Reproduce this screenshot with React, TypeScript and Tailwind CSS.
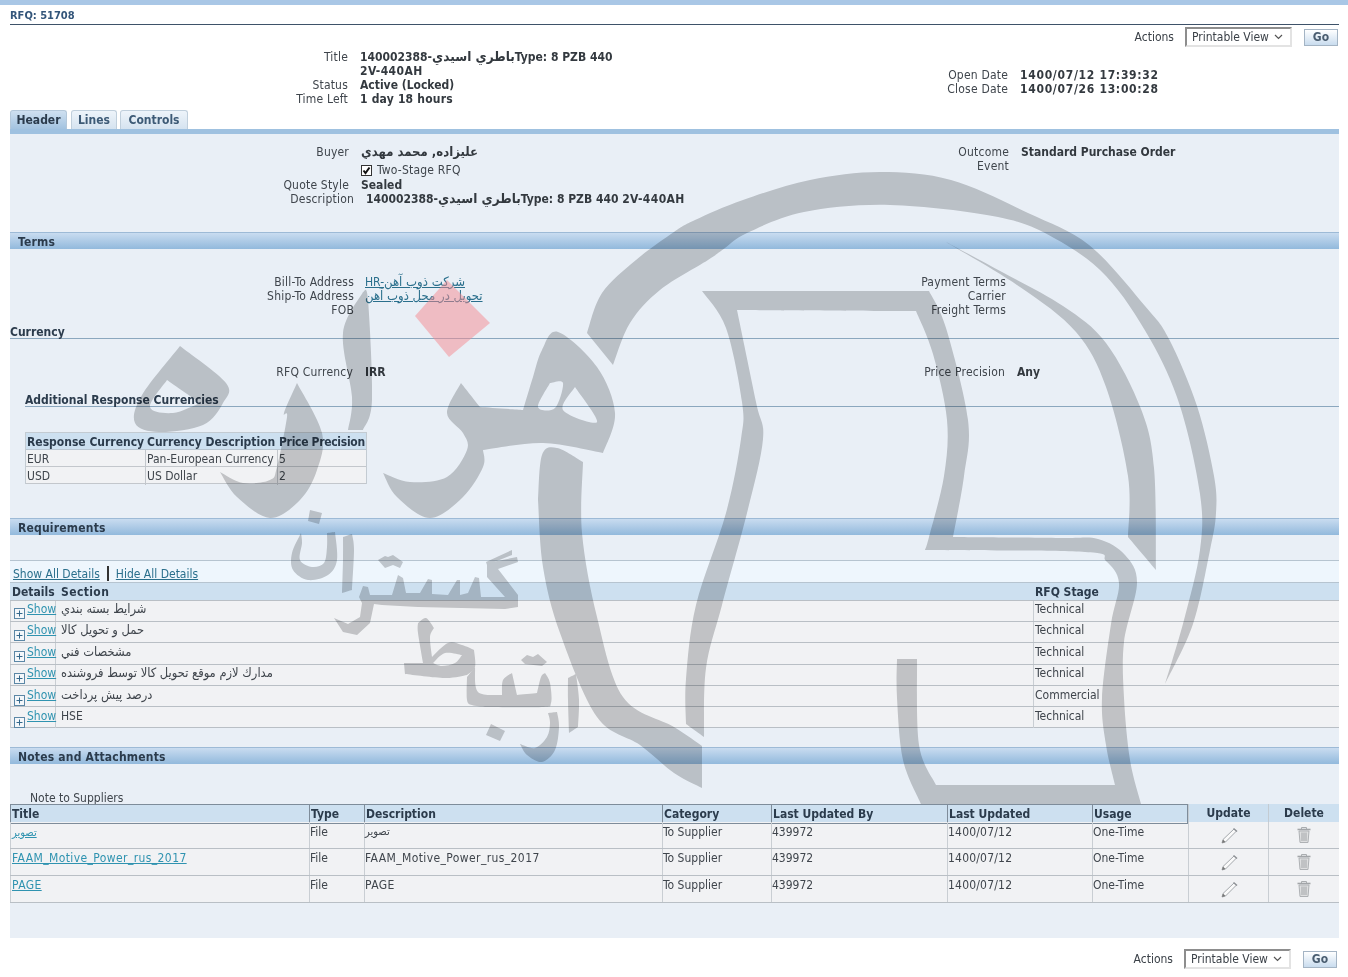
import React from "react";

const FONT = "[font-family:'DejaVu_Sans_Condensed','DejaVu_Sans',sans-serif]";

type Pt = [number, number];
// Builds a path through runs of points: each run is a smooth curve, runs meet at sharp corners.
function shape(runs: Pt[][]): string {
  let d = "";
  runs.forEach((p, idx) => {
    d += idx === 0 ? `M${p[0][0]} ${p[0][1]}` : `L${p[0][0]} ${p[0][1]}`;
    for (let i = 0; i < p.length - 1; i++) {
      const a = p[i - 1] || p[i];
      const b = p[i];
      const c = p[i + 1];
      const e = p[i + 2] || c;
      d += `C${b[0] + (c[0] - a[0]) / 6} ${b[1] + (c[1] - a[1]) / 6} ${c[0] - (e[0] - b[0]) / 6} ${c[1] - (e[1] - b[1]) / 6} ${c[0]} ${c[1]}`;
    }
  });
  return d + "Z";
}

const bigArc = shape([
  [[587,333],[602,293],[636,260],[674,232],[695,220],[743,200],[810,180],[880,172],[951,180],[1028,213],[1089,245],[1145,306],[1169,339],[1197,406],[1214,476],[1216,513],[1210,550],[1193,624],[1165,684]],
  [[1165,684],[1184,620],[1200,550],[1200,494],[1180,406],[1150,339],[1106,276],[1054,238],[998,217],[890,205],[804,212],[747,233],[725,248],[708,260],[660,290],[630,323],[613,365]],
]);
const thinArc = shape([
  [[946,242],[1002,272],[1063,306],[1106,343],[1141,409],[1154,468],[1156,570]],
  [[1156,570],[1128,537]],
  [[1128,537],[1128,476],[1106,387],[1076,332],[1020,287],[946,242]],
]);
const frame = shape([
  [[702,291],[929,291]],
  [[929,291],[946,328],[968,420],[964,476],[953,537]],
  [[953,537],[1060,538],[1098,539],[1125,555],[1137,583],[1124,642],[1124,698],[1130,760],[1141,804]],
  [[1141,804],[921,804]],
  [[921,804],[903,760],[897,698],[897,659]],
  [[897,659],[917,659]],
  [[917,659],[919,745],[936,785]],
  [[936,785],[1115,785]],
  [[1115,785],[1106,745],[1102,698],[1111,624],[1119,583],[1106,561],[1085,552],[925,550]],
  [[925,550],[929,537],[944,476],[947,420],[933,354],[916,311]],
  [[916,311],[737,310]],
  [[737,310],[756,402],[763,439],[747,513],[722,605],[706,668],[704,737]],
  [[704,737],[686,724]],
  [[686,724],[686,679],[696,605],[726,513],[741,439],[742,402],[726,328],[702,291]],
]);
const leftStroke = shape([
  [[538,500],[542,455],[557,448],[583,462]],
  [[583,462],[582,533],[597,617],[623,697],[674,727],[702,746]],
  [[702,746],[702,788]],
  [[702,788],[674,773],[640,745],[597,717],[560,633],[543,567],[538,500]],
]);
const hah = shape([
  [[180,346],[226,383],[223,403],[203,425],[159,432],[135,423],[142,395],[180,346]],
]) + shape([[[167,380],[200,403]],[[200,403],[173,413],[150,407],[167,380]]]);
const reh = shape([
  [[297,383],[322,433],[317,470],[300,500],[270,518],[237,497],[220,472]],
  [[220,472],[243,483],[270,480],[277,467],[287,417],[284,413],[297,383]],
]);
const alef = shape([
  [[363,292],[368,300],[372,400],[363,430]],
  [[363,430],[348,430]],
  [[348,430],[352,397],[343,333],[363,292]],
]);
const hehReh = shape([
  [[461,383],[480,407]],
  [[480,407],[523,410]],
  [[523,410],[533,377],[542,350],[558,332],[597,367],[615,413],[603,453]],
  [[603,453],[543,443],[483,450]],
  [[483,450],[483,467],[463,497],[430,518],[397,497],[383,473]],
  [[383,473],[410,482],[447,477],[467,450],[463,433],[447,413],[461,383]],
]) + shape([[[550,383],[563,383],[555,408],[538,407],[550,383]]]) + shape([[[575,387],[597,422],[563,410],[575,387]]]);
const gostaran = [
  "M310 510L322 513L319 524L308 521Z",
  shape([[[301,533],[292,553],[293,570],[308,580],[328,575],[337,560],[335,532]],[[335,532],[327,533]],[[327,533],[327,547],[324,563],[312,567],[300,560],[302,543],[301,533]]]),
  shape([[[343,537],[352,534]],[[352,534],[354,550],[352,590]],[[352,590],[342,593]],[[342,593],[343,560],[343,537]]]),
  "M378 560L385 556L388 557L393 555L403 562L400 568L393 565L385 568Z",
  "M359 597L363 586L368 587L370 595L392 595L398 575L403 578L406 593L420 593L428 579L432 580L432 594L448 595L457 580L460 580L460 595L468 593L475 577L479 578L481 597L505 597L487 577L487 563L517 557L518 562L498 569L518 595L518 607L505 609L418 607L382 605L374 604L370 623L357 635L343 632L334 618L348 624L360 617L362 603Z",
  "M486 562L512 550L512 555L487 565Z",
  shape([[[418,623],[426,618],[434,628]],[[434,628],[430,637],[432,657]],[[432,657],[448,643],[462,645],[474,650]],[[474,650],[475,667],[467,675]],[[467,675],[445,678],[405,674]],[[405,674],[404,663]],[[404,663],[423,663]],[[423,663],[418,633],[418,623]]])
    + shape([[[433,663],[445,653],[462,655]],[[462,655],[455,663],[442,666],[433,663]]]),
  shape([[[467,677],[467,700],[472,705],[485,707]],[[485,707],[542,707],[551,703],[550,683],[545,673]],[[545,673],[541,677],[537,693]],[[537,693],[517,695]],[[517,695],[512,673]],[[512,673],[503,680],[502,695]],[[502,695],[478,692],[475,667]]]),
  "M521 660L527 655L533 657L538 654L547 662L542 666L525 664Z",
  shape([[[568,678],[576,674]],[[576,674],[579,700],[578,727]],[[578,727],[569,733]],[[569,733],[568,700],[568,678]]]),
  shape([[[548,713],[557,712]],[[557,712],[559,727],[555,750],[542,762],[527,755],[520,744]],[[520,744],[535,748],[547,737],[550,723],[548,713]]]),
  "M491 724L505 731L500 741L486 735Z",
];

function Watermark() {
  return (
    <svg className="absolute left-0 top-0 pointer-events-none" width="1348" height="977" viewBox="0 0 1348 977">
      <path d="M447 280L490 323L449 357L415 316Z" fill="#f5898f" opacity="0.5" />
      <g fill="#cccdce" fillRule="evenodd" className="mix-blend-multiply">
        {[bigArc, thinArc, frame, leftStroke, hah, reh, alef, hehReh, ...gostaran].map((d, i) => (
          <path key={i} d={d} />
        ))}
      </g>
    </svg>
  );
}

function ActionsBar({ nudge }: { nudge: string }) {
  return (
    <div className={`flex justify-end items-center h-[20px] text-[12px] text-[#3b4148] ${nudge}`}>
      <span className="mr-[11px]">Actions</span>
      <div className="flex items-center justify-between w-[107px] h-[20px] pl-[5px] pr-[7px] bg-white border-2 border-t-[#8d8d8d] border-l-[#8d8d8d] border-r-[#e3e3e3] border-b-[#e3e3e3]">
        <span>Printable View</span>
        <svg width="9" height="6" viewBox="0 0 9 6"><path d="M1 1L4.5 4.5L8 1" fill="none" stroke="#555" strokeWidth="1.2" /></svg>
      </div>
      <div className="ml-[12px] w-[34px] h-[17px] flex items-center justify-center border border-[#a4b4c4] bg-gradient-to-b from-[#ffffff] to-[#c9dcee] font-bold text-[#4a5d70]">Go</div>
    </div>
  );
}

function Row({ label, value, lw, gap, bold = true, cls = "" }: { label: string; value?: React.ReactNode; lw: string; gap: string; bold?: boolean; cls?: string }) {
  return (
    <div className={`flex min-h-[14px] leading-[14px] ${cls}`}>
      <div className={`${lw} ${gap} shrink-0 text-right text-[#3f454c] tracking-[0.2px]`}>{label}</div>
      <div className={bold ? "font-bold text-[#33393f]" : ""}>{value}</div>
    </div>
  );
}

function Bar({ children }: { children: string }) {
  return (
    <div className="h-[17px] border-t border-[#9dbad6] bg-gradient-to-b from-[#c9dcf0] to-[#92b9dc] pl-[8px] text-[12px] tracking-[0.2px] leading-[18px] font-bold text-[#2b3b4c]">{children}</div>
  );
}

const A = ({ children, cls = "" }: { children: React.ReactNode; cls?: string }) => (
  <span className={`underline ${cls}`}>{children}</span>
);

const Ar = ({ children, cls = "text-[13px]" }: { children: string; cls?: string }) => <span className={`leading-none ${cls}`}>{children}</span>;

const titleValue = (
  <>
    <span className="tracking-[0.4px]">140002388-</span>
    <Ar cls="text-[13.5px]">باطري اسيدي</Ar>
    Type: 8 PZB 440 <span className="tracking-[0.4px]">2V-440AH</span>
  </>
);

function Plus() {
  return (
    <svg width="11" height="11" viewBox="0 0 11 11" className="shrink-0">
      <rect x="0.5" y="0.5" width="10" height="10" fill="#f4f7fa" stroke="#5b87a6" />
      <path d="M5.5 2.5V8.5M2.5 5.5H8.5" stroke="#34688c" />
    </svg>
  );
}

function PencilIcon() {
  return (
    <svg width="20" height="20" viewBox="0 0 20 20">
      <path d="M3 17L4 13.5L15 3L17.5 5L6.5 16Z" fill="#fafafa" stroke="#a4a8ac" strokeWidth="1" />
      <path d="M3 17L4 13.5L6.5 16Z" fill="#777" />
      <path d="M14.5 2.5L18 5.5" stroke="#8f9397" strokeWidth="1.5" />
    </svg>
  );
}

function TrashIcon() {
  return (
    <svg width="16" height="18" viewBox="0 0 16 18">
      <path d="M1.5 3.5H14.5" stroke="#a2a5a8" strokeWidth="1.6" />
      <path d="M5.5 3V1.5H10.5V3" fill="none" stroke="#a9acaf" />
      <path d="M3 5H13L12 16.5H4Z" fill="#dedfe0" stroke="#aeb1b4" />
      <path d="M6 6.5V15M8 6.5V15M10 6.5V15" stroke="#a2a5a8" />
    </svg>
  );
}

const reqRows: [string, string][] = [
  ["شرايط بسته بندي", "Technical"],
  ["حمل و تحويل كالا", "Technical"],
  ["مشخصات فني", "Technical"],
  ["مدارك لازم موقع تحويل كالا توسط فروشنده", "Technical"],
  ["درصد پيش پرداخت", "Commercial"],
  ["HSE", "Technical"],
];
const reqHeights = ["h-[21px]", "h-[21px]", "h-[22px]", "h-[21px]", "h-[21px]", "h-[22px]"];
const reqText = ["pt-[1px]", "pt-[1px]", "pt-[2px]", "pt-[1px]", "pt-[2px]", "pt-[2px]"];
const reqIcon = ["mt-[6px]", "mt-[7px]", "mt-[6px]", "mt-[7px]", "mt-[7px]", "mt-[8px]"];

const attach: [string, string][] = [
  ["تصوير", "تصوير"],
  ["FAAM_Motive_Power_rus_2017", "FAAM_Motive_Power_rus_2017"],
  ["PAGE", "PAGE"],
];
const attachCols = "grid-cols-[299px_55px_298px_109px_176px_145px_96px_80px_71px]";

export default function App() {
  return (
    <div className={`relative w-[1348px] h-[977px] overflow-hidden bg-white text-[12px] text-[#3f454c] ${FONT}`}>
      <div className="h-[5px] bg-[#a9c7e6]" />
      <div className="pl-[10px] pr-[9px]">
        <div className="h-[20px] border-b border-[#3e5269] text-[11px] leading-[21px] font-bold text-[#33557a]">RFQ: 51708</div>
        <ActionsBar nudge="mt-[2px] pr-[1px]" />

        <div className="flex mt-[3px] h-[60px]">
          <div className="w-[615px] shrink-0">
            <Row label="Title" lw="w-[338px]" gap="mr-[12px]" value={titleValue} />
            <Row label="Status" lw="w-[338px]" gap="mr-[12px]" value="Active (Locked)" />
            <Row label="Time Left" lw="w-[338px]" gap="mr-[12px]" value={<span className="tracking-[0.2px]">1 day 18 hours</span>} />
          </div>
          <div className="mt-[18px]">
            <Row label="Open Date" lw="w-[383px]" gap="mr-[12px]" value={<span className="tracking-[0.7px]">1400/07/12 17:39:32</span>} />
            <Row label="Close Date" lw="w-[383px]" gap="mr-[12px]" value={<span className="tracking-[0.7px]">1400/07/26 13:00:28</span>} />
          </div>
        </div>

        <div className="flex items-end h-[19px] gap-[3px] text-[12px] font-bold leading-[18px]">
          <div className="w-[57px] h-[19px] text-center rounded-t-[3px] bg-gradient-to-b from-[#cfe0f0] to-[#a3c3e0] border border-b-0 border-[#b4c8da] text-[#2b3b4c]">Header</div>
          <div className="w-[46px] h-[19px] ml-[1px] text-center rounded-t-[3px] bg-gradient-to-b from-[#eef4fa] to-[#d5e3f0] border border-b-0 border-[#c0cfdc] text-[#3d5a76]">Lines</div>
          <div className="w-[68px] h-[19px] text-center rounded-t-[3px] bg-gradient-to-b from-[#eef4fa] to-[#d5e3f0] border border-b-0 border-[#c0cfdc] text-[#3d5a76]">Controls</div>
        </div>
        <div className="h-[5px] bg-[#9fc1e0]" />

        <div className="h-[804px] bg-[#e9eff6]">
          <div className="flex pt-[11px] h-[71px]">
            <div className="w-[700px] shrink-0">
              <Row label="Buyer" lw="w-[339px]" gap="mr-[12px]" value={<Ar>عليزاده, محمد مهدي</Ar>} />
              <div className="flex items-center h-[14px] mt-[4px] pl-[351px] text-[#3f454c] tracking-[0.2px]">
                <svg width="11" height="11" viewBox="0 0 11 11" className="mr-[5px]">
                  <rect x="0.5" y="0.5" width="10" height="10" fill="#fff" stroke="#333" />
                  <path d="M2.5 5.5L4.5 8L8.5 2.5" fill="none" stroke="#111" strokeWidth="2" />
                </svg>
                Two-Stage RFQ
              </div>
              <Row label="Quote Style" lw="w-[339px]" gap="mr-[12px]" cls="mt-[1px]" value="Sealed" />
              <Row label="Description" lw="w-[344px]" gap="mr-[12px]" value={titleValue} />
            </div>
            <div>
              <Row label="Outcome" lw="w-[299px]" gap="mr-[12px]" value="Standard Purchase Order" />
              <Row label="Event" lw="w-[299px]" gap="mr-[12px]" />
            </div>
          </div>

          <div className="mt-[27px]"><Bar>Terms</Bar></div>

          <div className="flex mt-[25px] pt-[1px] h-[42px]">
            <div className="w-[700px] shrink-0">
              <Row label="Bill-To Address" lw="w-[344px]" gap="mr-[11px]" bold={false} value={<A cls="text-[#2a6f8c]">HR-<Ar>شركت ذوب آهن</Ar></A>} />
              <Row label="Ship-To Address" lw="w-[344px]" gap="mr-[11px]" bold={false} value={<A cls="text-[#2a6f8c]"><Ar>تحويل در محل ذوب آهن</Ar></A>} />
              <Row label="FOB" lw="w-[344px]" gap="mr-[11px]" />
            </div>
            <div>
              <Row label="Payment Terms" lw="w-[296px]" gap="mr-[11px]" />
              <Row label="Carrier" lw="w-[296px]" gap="mr-[11px]" />
              <Row label="Freight Terms" lw="w-[296px]" gap="mr-[11px]" />
            </div>
          </div>

          <div className="h-[23px] border-b border-[#8ba7be] text-[12px] font-bold leading-[32px] text-[#2b3b4c]">Currency</div>

          <div className="flex mt-[26px] h-[14px]">
            <div className="w-[700px] shrink-0">
              <Row label="RFQ Currency" lw="w-[343px]" gap="mr-[12px]" value="IRR" />
            </div>
            <Row label="Price Precision" lw="w-[295px]" gap="mr-[12px]" value="Any" />
          </div>

          <div className="ml-[15px] h-[28px] border-b border-[#8ba7be] text-[12px] font-bold leading-[43px] text-[#2b3b4c]">Additional Response Currencies</div>

          <div className="ml-[15px] mt-[25px] w-[342px] border border-[#c3cbd2] border-b-0">
            <div className="grid grid-cols-[120px_132px_88px] h-[17px] bg-[#cde0f0] font-bold text-[#2b3b4c] leading-[18px] border-b border-[#b9c6d2]">
              <div className="pl-[1px] whitespace-nowrap">Response Currency</div>
              <div className="pl-[1px] whitespace-nowrap">Currency Description</div>
              <div className="pl-[1px] whitespace-nowrap tracking-[-0.3px]">Price Precision</div>
            </div>
            {[["EUR", "Pan-European Currency", "5"], ["USD", "US Dollar", "2"]].map((r) => (
              <div key={r[0]} className="grid grid-cols-[120px_132px_88px] h-[17px] bg-[#f1f2f4] leading-[18px] border-b border-[#c3c7cc]">
                <div className="pl-[1px] border-r border-[#c3c7cc]">{r[0]}</div>
                <div className="pl-[1px] border-r border-[#c3c7cc] whitespace-nowrap">{r[1]}</div>
                <div className="pl-[1px]">{r[2]}</div>
              </div>
            ))}
          </div>

          <div className="mt-[34px]"><Bar>Requirements</Bar></div>

          <div className="mt-[25px] h-[22px] flex items-end pl-[3px] bg-[#eef6fd] border-t border-[#b6c4d0] leading-[15px]">
            <A cls="text-[#2a6f8c]">Show All Details</A>
            <span className="mx-[7px] mb-[1px] w-[2px] h-[15px] bg-[#333]" />
            <A cls="text-[#2a6f8c]">Hide All Details</A>
          </div>
          <div className="grid grid-cols-[46px_977px_1fr] h-[18px] bg-[#cde0f0] border-t border-[#b6c4d0] font-bold text-[12px] leading-[19px] text-[#2b3b4c]">
            <div className="pl-[2px]">Details</div>
            <div className="pl-[5px] tracking-[0.4px]">Section</div>
            <div className="pl-[2px]">RFQ Stage</div>
          </div>
          {reqRows.map((r, i) => (
            <div key={i} className={`grid grid-cols-[46px_977px_1fr] ${reqHeights[i]} bg-[#f1f2f4] border-t border-[#b9bfc5] ${i === 5 ? "border-b" : ""}`}>
              <div className={`flex pl-[3px] border-l border-r border-[#c9ced3] ${reqText[i]}`}>
                <span className={reqIcon[i]}><Plus /></span>
                <A cls="ml-[2px] text-[#2f93b0] leading-[15px]">Show</A>
              </div>
              <div className={`pl-[5px] leading-[15px] ${reqText[i]}`}>{i === 5 ? r[0] : <Ar cls="text-[12.8px]">{r[0]}</Ar>}</div>
              <div className={`pl-[1px] leading-[15px] border-l border-[#c9ced3] ${reqText[i]}`}>{r[1]}</div>
            </div>
          ))}

          <div className="mt-[19px]"><Bar>Notes and Attachments</Bar></div>

          <div className="mt-[27px] pl-[20px] h-[13px] leading-[14px]">Note to Suppliers</div>
          <div className={`grid ${attachCols} h-[18px] bg-[#cde0f0] font-bold text-[12px] text-[#2b3b4c] leading-[18px]`}>
            {["Title", "Type", "Description", "Category", "Last Updated By", "Last Updated", "Usage"].map((h, i) => (
              <div key={h} className={`pl-[1px] border-y border-l border-[#7e8c9a] whitespace-nowrap ${i === 6 ? "border-r" : ""}`}>{h}</div>
            ))}
            <div className="text-center border-l border-[#c3cbd2]">Update</div>
            <div className="text-center border-l border-[#c3cbd2]">Delete</div>
          </div>
          {attach.map((r, i) => (
            <div key={i} className={`grid ${attachCols} h-[27px] bg-[#f1f2f4] border-b border-[#b9bfc5] ${i === 0 ? "leading-[20px]" : "leading-[18px]"}`}>
              <div className="pl-[1px] border-l border-[#c9ced3]"><A cls={`text-[#2f93b0] ${i === 0 ? "text-[11px]" : "tracking-[0.4px]"}`}>{r[0]}</A></div>
              <div className="border-l border-[#c9ced3]">File</div>
              <div className={`border-l border-[#c9ced3] ${i === 0 ? "text-[11px]" : "tracking-[0.4px]"}`}>{r[1]}</div>
              <div className="border-l border-[#c9ced3]">To Supplier</div>
              <div className="border-l border-[#c9ced3]">439972</div>
              <div className="border-l border-[#c9ced3] tracking-[0.2px]">1400/07/12</div>
              <div className="border-l border-[#c9ced3]">One-Time</div>
              <div className="flex justify-center pt-[4px] border-l border-[#c9ced3]"><PencilIcon /></div>
              <div className="flex justify-center pt-[4px] border-l border-[#c9ced3]"><TrashIcon /></div>
            </div>
          ))}
        </div>

        <ActionsBar nudge="mt-[11px] pr-[2px]" />
      </div>
      <Watermark />
    </div>
  );
}
